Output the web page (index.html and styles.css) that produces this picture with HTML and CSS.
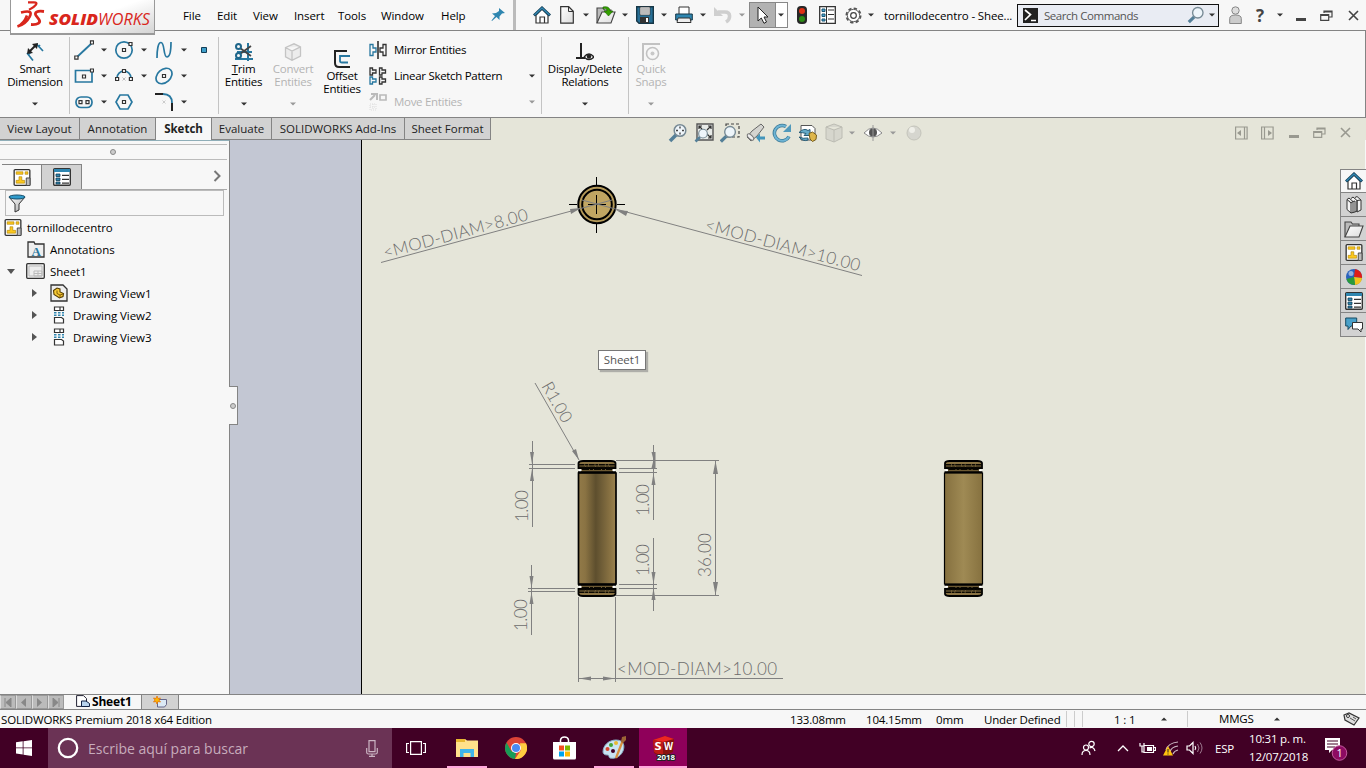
FILE: index.html
```html
<!DOCTYPE html>
<html lang="en">
<head>
<meta charset="utf-8">
<title>SOLIDWORKS Premium 2018</title>
<link rel="stylesheet" href="styles.css">
</head>
<body>
<svg class="defs" width="0" height="0">
  <defs>
    <linearGradient id="front" x1="0" x2="1"><stop offset="0" stop-color="#927a48"/><stop offset=".18" stop-color="#8a7343"/><stop offset=".46" stop-color="#5e4f2e"/><stop offset=".58" stop-color="#6b5a35"/><stop offset=".85" stop-color="#8a7343"/><stop offset="1" stop-color="#9b8350"/></linearGradient>
    <linearGradient id="side" x1="0" x2="1"><stop offset="0" stop-color="#85703f"/><stop offset=".5" stop-color="#9f8a54"/><stop offset="1" stop-color="#86713f"/></linearGradient>
    <linearGradient id="grey" x1="0" y1="0" x2="1" y2="1"><stop offset="0" stop-color="#fff"/><stop offset="1" stop-color="#a8a8a8"/></linearGradient>
    <linearGradient id="paper" x1="0" y1="0" x2="1" y2="1"><stop offset="0" stop-color="#fff"/><stop offset="1" stop-color="#dcdcdc"/></linearGradient>
  </defs>
  <symbol id="arr" viewBox="0 0 6 4"><path d="M0 0.5h6L3 3.5z" fill="currentColor"/></symbol>
  <symbol id="home" viewBox="0 0 18 18"><path d="M3 9v8h12V9L9 3z" fill="#fff" stroke="#333" stroke-width="1.2"/><path d="M7 17v-6h4.500v6" fill="none" stroke="#333" stroke-width="1.2"/><path d="M1 9.500L9 2l8 7.500" fill="none" stroke="#123d56" stroke-width="3"/><path d="M1.500 9L9 2l7.500 7" fill="none" stroke="#3187b1" stroke-width="1.400"/></symbol>
  <symbol id="drawing" viewBox="0 0 18 18"><rect x=".7" y=".7" width="16.600" height="16.600" rx="1" fill="#fff" stroke="#333" stroke-width="1.400"/><path d="M2.800 3h7.200v2.600H2.800zM12.300 3h3v2.600h-3zM5.800 8.200h3v3.800h3v3H2.800v-3h3z" fill="#fcc81e" stroke="#a87c00" stroke-width=".6"/><path d="M13.500 9.500h4v8h-4z" fill="#bbb" stroke="#444"/></symbol>
  <symbol id="list" viewBox="0 0 18 18"><rect x=".7" y=".7" width="16.600" height="16.600" rx="1" fill="#fff" stroke="#333" stroke-width="1.400"/><path d="M1 1h16v3H1z" fill="#2f86b0"/><path d="M3 6h4v2.500H3zM3 10h4v2.500H3zM3 14h4v2H3z" fill="#2f86b0" stroke="#123d56" stroke-width=".8"/><path d="M9 7.300h7M9 11.300h7M9 15.200h7" stroke="#333" stroke-width="1.200"/></symbol>
  <symbol id="folder" viewBox="0 0 20 18"><path d="M1 17V2h6l1.500 2H15v3" fill="#bbb" stroke="#444" stroke-width="1.100"/><path d="M1 17L6 6h13l-4 11z" fill="url(#paper)" stroke="#444" stroke-width="1.100"/></symbol>
  <symbol id="restore" viewBox="0 0 13 11"><path d="M4 3V1h8v6H9M4 2h8" fill="none" stroke="currentColor" stroke-width="1.200"/><path d="M.7 4.500h8v5.800h-8zM.7 5.300h8" fill="none" stroke="currentColor" stroke-width="1.200"/></symbol>
  <symbol id="close" viewBox="0 0 11 11"><path d="M1 1l9 9M10 1l-9 9" stroke="currentColor" stroke-width="1.600"/></symbol>
  <symbol id="min" viewBox="0 0 10 11"><path d="M0 8h10v3H0z" fill="currentColor"/></symbol>
  <symbol id="dview" viewBox="0 0 12 18"><path d="M1.500 1h9v3.500h-9zM7 1v3.500M1.500 11.500h7l2 1.500v4h-9z" fill="#fff" stroke="#333" stroke-width="1.200"/><path d="M1 6.700h10M1 9.300h10" stroke="#2f86b0" stroke-width="1.600" stroke-dasharray="2.500 1.500"/></symbol>
  <symbol id="caps" viewBox="0 0 40 14"><path d="M4 12.500h32V8H4z" fill="#6d5a33"/><path d="M1.500 3Q2 1 6 1h28q4 0 4.500 2v5h-37z" fill="#8a7343" stroke="#000" stroke-width="1.800"/><path d="M1.500 4.800h37M2 7.200h36" stroke="#0b0903" stroke-width="1.500" stroke-dasharray="6 .6 3 .6"/><path d="M5 9.300h30" stroke="#0b0903" stroke-width="1.400" stroke-dasharray="7 1 3 1"/><path d="M1 12.300h38" stroke="#000" stroke-width="2"/><path d="M2 9.500h2.500v1.500H2zM35.500 9.500H38v1.500h-2.500z" fill="#fff"/></symbol>
  <symbol id="mag" viewBox="0 0 20 20"><path d="M8 12l-6 6" stroke="#547f98" stroke-width="3.500"/><circle cx="12" cy="7.500" r="5.800" fill="#eef5fa" stroke="#778a95" stroke-width="1.500"/></symbol>
</svg>

<header class="titlebar">
  <div class="logo">
    <svg width="144" height="34" viewBox="0 0 144 34">
      <g fill="none" stroke="#d9261c" stroke-width="2.200"><path d="M17 2.300h6c5 0 2 4-5 7.500"/><path d="M10 12.500c10-2.500 11 0 8.500 4.500-2 4-6 8-12 9.500 6-2.500 8-7 9.500-11" stroke-width="2.600"/><path d="M33 11.500c-7-1-10 1-8 4l3 4c2 3-1 5.500-8 5" stroke-width="2.800"/></g>
      <g fill="#d9261c" font-family="Open Sans, sans-serif" font-size="15.500" font-style="italic"><text x="38" y="24.500" font-weight="800" textLength="49" lengthAdjust="spacingAndGlyphs">SOLID</text><text x="87" y="24.500" textLength="52" lengthAdjust="spacingAndGlyphs">WORKS</text></g>
    </svg>
  </div>
  <nav class="menu"><span>File</span><span>Edit</span><span>View</span><span>Insert</span><span>Tools</span><span>Window</span><span>Help</span>
    <svg width="14" height="14" viewBox="0 0 14 14"><path d="M8 0l6 5-3 .5-2.500 3V12L5.500 9 1 13 .5 12.500 4 8 1 5.500l4-.5L8 3z" fill="#2f86b0"/></svg></nav>
  <div class="quick">
    <svg width="18" height="18"><use href="#home"/></svg>
    <svg width="14" height="18" viewBox="0 0 14 18"><path d="M.7.700h8l4.600 4.500v12H.7z" fill="url(#paper)" stroke="#333" stroke-width="1.200"/><path d="M8.500 1v4.500H13" fill="none" stroke="#333"/></svg>
    <svg class="a"><use href="#arr"/></svg>
    <svg width="20" height="18" viewBox="0 0 20 18"><use href="#folder"/><path d="M7 1c5-1 7 1 7 4h3l-4.500 5L8 5h3c0-2-1-3-4-2z" fill="#35a000" stroke="#1b6500" stroke-width=".6"/></svg>
    <svg class="a"><use href="#arr"/></svg>
    <svg width="18" height="18" viewBox="0 0 18 18"><path d="M.7.700h16.600v16.600H3L.7 15z" fill="#276f96" stroke="#173747" stroke-width="1.400"/><path d="M4 1h10v8H4z" fill="#eee" stroke="#333" stroke-width=".7"/><path d="M5 3h8M5 5h8M5 7h8" stroke="#888"/><path d="M4 11h9v6H4z" fill="#333"/><path d="M10 12h2v4h-2z" fill="#fff"/></svg>
    <svg class="a"><use href="#arr"/></svg>
    <svg width="18" height="18" viewBox="0 0 18 18"><path d="M4 8V1h10v7" fill="#fff" stroke="#333"/><path d="M.7 8h16.600v6H.7z" fill="#2f86b0" stroke="#173747"/><path d="M3 12h12l1 4.500H2z" fill="#eee" stroke="#333"/></svg>
    <svg class="a"><use href="#arr"/></svg>
    <svg width="18" height="18" viewBox="0 0 18 18"><path d="M4 6h7c6 0 6 7 1 10" fill="none" stroke="#cfcfcf" stroke-width="3.500"/><path d="M0 1v9h9z" fill="#cfcfcf"/></svg>
    <svg class="a dim"><use href="#arr"/></svg>
    <div class="select"><svg width="12" height="18" viewBox="0 0 12 18"><path d="M1 1v14l3.300-3 2.700 5.300 2.500-1.300L7 11h4z" fill="#fff" stroke="#222"/></svg><svg class="a"><use href="#arr"/></svg></div>
    <svg width="12" height="18" viewBox="0 0 12 18"><rect x="1" width="10" height="18" rx="4" fill="#272727"/><circle cx="6" cy="5" r="3" fill="#e03014"/><circle cx="6" cy="13" r="3" fill="#2c8c13"/></svg>
    <svg width="17" height="18" viewBox="0 0 17 18"><path d="M.7.700h15.600v16.600H.7z" fill="#fff" stroke="#333" stroke-width="1.300"/><path d="M7.500 1v16" stroke="#333"/><path d="M3 3h3v2.500H3zM3 8h3v2.500H3zM3 13h3v2H3z" fill="#49a8d4" stroke="#1b5472"/><path d="M9 4h6M9 8.500h6M9 13h6" stroke="#333"/></svg>
    <svg width="17" height="17" viewBox="0 0 18 18"><circle cx="9" cy="9" r="7.500" fill="none" stroke="#555" stroke-width="2" stroke-dasharray="3.500 2.390"/><circle cx="9" cy="9" r="6.500" fill="#fff" stroke="#555"/><circle cx="9" cy="9" r="3" fill="none" stroke="#444" stroke-width="1.300"/></svg>
    <svg class="a"><use href="#arr"/></svg>
  </div>
  <div class="doc">tornillodecentro - Shee...</div>
  <div class="search">
    <svg width="15" height="15" viewBox="0 0 15 15"><path d="M0 0h15v15H0z" fill="#222"/><path d="M2 2l5.500 4.500L2 12M8 12.500h5" fill="none" stroke="#fff" stroke-width="1.700"/></svg>
    <span>Search Commands</span><svg width="18" height="18"><use href="#mag"/></svg><svg class="a"><use href="#arr"/></svg>
  </div>
  <div class="win">
    <svg width="13" height="18" viewBox="0 0 13 18"><circle cx="6.500" cy="4.500" r="3.700" fill="#ddd" stroke="#888"/><path d="M.7 17.500v-5q0-3.500 5.800-3.500t5.800 3.500v5z" fill="#ccc" stroke="#888"/></svg>
    <b>?</b><svg class="a"><use href="#arr"/></svg>
    <svg width="10" height="11"><use href="#min"/></svg><svg width="13" height="11"><use href="#restore"/></svg><svg width="11" height="11"><use href="#close"/></svg>
  </div>
</header>

<section class="ribbon">
  <div class="big smart"><svg width="18" height="18" viewBox="0 0 18 18"><path d="M1 10l6 7.500M10.500 1L17 8M2 12l3-3M12 4l2-2" stroke="#2878a0" stroke-width="1.700"/><path d="M3 9l7-7" stroke="#222" stroke-width="2"/><path d="M1 11l1-6 5 5zM12 0l-1 6-5-5z" fill="#222"/></svg><span>Smart<br>Dimension</span><svg class="a"><use href="#arr"/></svg></div>
  <div class="tools">
    <svg width="20" height="20" viewBox="0 0 20 20"><path d="M2.500 17.500l16-15" stroke="#2878a0" stroke-width="1.800"/><path d="M.8 16h3.200v3.200H.8zM16.500.800h3V4h-3z" fill="#fff" stroke="#333" stroke-width="1.200"/></svg><svg class="a"><use href="#arr"/></svg>
    <svg width="20" height="20" viewBox="0 0 20 20"><circle cx="10" cy="10" r="8.200" fill="none" stroke="#2878a0" stroke-width="1.700"/><path d="M8.500 8.500h3v3h-3zM15 2.500h3v3h-3z" fill="#fff" stroke="#333" stroke-width="1.200"/></svg><svg class="a"><use href="#arr"/></svg>
    <svg width="18" height="18" viewBox="0 0 18 18"><path d="M2 17C2 9 3 1.500 6 1.500c4 0 2 14.500 6 14.500 3 0 4-7 4-15" fill="none" stroke="#2878a0" stroke-width="1.700"/></svg><svg class="a"><use href="#arr"/></svg>
    <svg width="6" height="6" viewBox="0 0 6 6"><path d="M.5.500h5v5h-5z" fill="#3e9fca" stroke="#123d56"/></svg>
    <svg width="20" height="18" viewBox="0 0 20 18"><path d="M1.500 3.500h16.500v11.500H1.500z" fill="none" stroke="#2878a0" stroke-width="1.700"/><path d="M8.500 8h3v3h-3zM16.500 2h3v3h-3z" fill="#fff" stroke="#333" stroke-width="1.200"/></svg><svg class="a"><use href="#arr"/></svg>
    <svg width="18" height="18" viewBox="0 0 18 18"><path d="M2 11a7 7 0 0 1 14 0" fill="none" stroke="#2878a0" stroke-width="1.700"/><path d="M7.500 2.500h3v3h-3zM.6 10.500h3v3h-3zM14.400 10.500h3v3h-3z" fill="#fff" stroke="#333" stroke-width="1.200"/><path d="M7.500 10.500l3 3M10.500 10.500l-3 3" stroke="#bbb"/></svg><svg class="a"><use href="#arr"/></svg>
    <svg width="18" height="18" viewBox="0 0 18 18"><ellipse cx="9" cy="9" rx="9" ry="6.500" transform="rotate(-42 9 9)" fill="none" stroke="#2878a0" stroke-width="1.700"/><path d="M7.500 7.500h3v3h-3z" fill="#fff" stroke="#333" stroke-width="1.200"/></svg><svg class="a"><use href="#arr"/></svg>
    <i></i>
    <svg width="18" height="18" viewBox="0 0 18 18"><rect x="1" y="4" width="16" height="10.500" rx="5" fill="none" stroke="#2878a0" stroke-width="1.700"/><path d="M4 7.700h3v3H4zM11 7.700h3v3h-3z" fill="#fff" stroke="#333" stroke-width="1.200"/></svg><svg class="a"><use href="#arr"/></svg>
    <svg width="18" height="18" viewBox="0 0 18 18"><path d="M5 2h8l4 7-4 7H5L1 9z" fill="none" stroke="#2878a0" stroke-width="1.700"/><path d="M7.500 7.500h3v3h-3z" fill="#fff" stroke="#333" stroke-width="1.200"/></svg><i></i>
    <svg width="18" height="18" viewBox="0 0 18 18"><path d="M0 1h8M17 10v8" stroke="#222" stroke-width="2"/><path d="M8 1q9 0 9 9" fill="none" stroke="#2878a0" stroke-width="1.800"/><path d="M7.500 7.500l3 3M10.500 7.500l-3 3" stroke="#ccc"/></svg><svg class="a"><use href="#arr"/></svg>
  </div>
  <div class="big trim"><svg width="18" height="18" viewBox="0 0 18 18"><path d="M13 0v18M0 16h18M2 9h15" stroke="#2878a0" stroke-width="2"/><path d="M5 5l11 8M5 11l11-8" stroke="#444" stroke-width="1.800"/><circle cx="3.500" cy="3.500" r="2.500" fill="none" stroke="#1f668a" stroke-width="2"/><circle cx="3.500" cy="12.500" r="2.500" fill="none" stroke="#1f668a" stroke-width="2"/></svg><span><u>T</u>rim<br>Entities</span><svg class="a"><use href="#arr"/></svg></div>
  <div class="big convert dim"><svg width="18" height="18" viewBox="0 0 18 18"><path d="M1.500 4.500L10 .800l6.500 3V13L8 17.300l-6.500-3.500zM1.500 4.500L8 8l8.500-4.200M8 8v9" fill="#ececec" stroke="#c4c4c4" stroke-width="1.300"/></svg><span>Convert<br>Entities</span><svg class="a"><use href="#arr"/></svg></div>
  <div class="big offset"><svg width="18" height="18" viewBox="0 0 18 18"><path d="M14 1H2v12q0 4 4 4h11" fill="none" stroke="#222" stroke-width="2"/><path d="M17 6H7v5q0 1.500 2 1.500h6" fill="none" stroke="#2878a0" stroke-width="1.800"/></svg><span>Offset<br>Entities</span></div>
  <div class="rows">
    <svg width="18" height="18" viewBox="0 0 18 18"><path d="M9 0v18" stroke="#222" stroke-width="1.500"/><path d="M1 3.500h3v3.500h3v4H4v3.500H1z" fill="none" stroke="#2878a0" stroke-width="1.300"/><path d="M17 3.500h-3v3.500h-3v4h3v3.500h3z" fill="none" stroke="#333" stroke-width="1.300"/></svg><span>Mirror Entities</span><i></i>
    <svg width="18" height="18" viewBox="0 0 18 18"><path d="M1 1h2.500v2H7v3H3.500v2H1zM10.500 1H13v2h3.500v3H13v2h-2.500zM10.500 10H13v2h3.500v3H13v2h-2.500z" fill="none" stroke="#333" stroke-width="1.300"/><path d="M1 10h2.500v2H7v3H3.500v2H1z" fill="none" stroke="#2878a0" stroke-width="1.300"/></svg><span>Linear Sketch Pattern</span><svg class="a"><use href="#arr"/></svg>
    <svg class="dim" width="18" height="18" viewBox="0 0 18 18"><path d="M1 7l5-5M2 1h6v6" fill="none" stroke="#bbb" stroke-width="2"/><path d="M11 2h6v5h-6z" fill="none" stroke="#bbb" stroke-width="1.700"/><path d="M1 11h6v6H1zM4 11v6M1 14h6" fill="none" stroke="#ddd" stroke-dasharray="1 1"/></svg><span class="dim">Move Entities</span><svg class="a dim"><use href="#arr"/></svg>
  </div>
  <div class="big display"><svg width="18" height="18" viewBox="0 0 18 18"><path d="M5 0v15M0 15h9" stroke="#222" stroke-width="2"/><path d="M8 14q5-6 10 0-5 5-10 0" fill="#fff" stroke="#222" stroke-width="1.300"/><circle cx="13" cy="13.500" r="2.200" fill="#222"/></svg><span>Display/Delete<br>Relations</span><svg class="a"><use href="#arr"/></svg></div>
  <div class="big snaps dim"><svg width="18" height="18" viewBox="0 0 18 18"><path d="M1 18V1h17" fill="none" stroke="#c2c2c2" stroke-width="2"/><circle cx="10.500" cy="10.500" r="6" fill="none" stroke="#c2c2c2" stroke-width="1.600"/><circle cx="10.500" cy="10.500" r="2" fill="#c8c8c8"/></svg><span>Quick<br>Snaps</span><svg class="a"><use href="#arr"/></svg></div>
</section>

<main class="work">
  <div class="tabrow">
    <div class="tabs"><span>View Layout</span><span>Annotation</span><span class="on">Sketch</span><span>Evaluate</span><span>SOLIDWORKS Add-Ins</span><span>Sheet Format</span></div>
    <div class="hud">
      <svg width="20" height="20" viewBox="0 0 20 20"><use href="#mag"/><path d="M12 3.500v2M12 9.500v2M8 7.500h2M14 7.500h2" stroke="#444" stroke-width="1.400"/></svg>
      <svg width="20" height="20" viewBox="0 0 20 20"><path d="M3 1h16v16H3z" fill="#e8ebe8" stroke="#555" stroke-width="1.400"/><path d="M5 6V3h3M5 3l3 3M14 3h3v3M17 3l-4 4M17 12v3h-3M17 15l-4-4" fill="none" stroke="#333" stroke-width="1.200"/><g transform="translate(0 5) scale(.75)"><use href="#mag" width="20" height="20"/></g></svg>
      <svg width="20" height="20" viewBox="0 0 20 20"><path d="M6 1h13v13H6z" fill="none" stroke="#444" stroke-width="1.200" stroke-dasharray="3 2"/><g transform="translate(-1 2) scale(.92)"><use href="#mag" width="20" height="20"/></g></svg>
      <svg width="20" height="20" viewBox="0 0 20 20"><path d="M1 14l5-6 9-7 3 3-7 9-6 5z" fill="#d4d4d0" stroke="#666"/><ellipse cx="4.500" cy="14" rx="2" ry="4" transform="rotate(-45 4.500 14)" fill="#eee" stroke="#777"/><path d="M10 14.500l4-4v3h5v3h-5v3z" fill="#4395bb"/></svg>
      <svg width="20" height="20" viewBox="0 0 20 20"><path d="M14 3.500a7.700 7.700 0 1 0 3 10" fill="none" stroke="#3b7895" stroke-width="3.500"/><path d="M14 3.500a7.700 7.700 0 1 0 3 10" fill="none" stroke="#6eb4d4" stroke-width="2"/><path d="M19 1v8h-8z" fill="#5199bb"/></svg>
      <svg width="20" height="20" viewBox="0 0 20 20"><path d="M3 2.500h11l3 3V17H3z" fill="#fff" stroke="#555"/><path d="M1 9.500q5-5 9-2l2-1v6H6l2-2q-3-1-7-1zM1 14q4 5 9 3v-2q-5 1-9-1z" fill="#65aac8" stroke="#285c76"/><path d="M11 10.500l3.500-1.500 4 3-.5 4.500-3.500 2L12 16z" fill="#deb64a" stroke="#765c1b"/></svg>
      <svg width="20" height="20" viewBox="0 0 20 20"><path d="M2 4l8-3 8 3v11l-8 4-8-3zM2 4l8 3 8-3M10 7v12" fill="#d6d6cd" stroke="#bcbcb3"/></svg>
      <svg class="a"><use href="#arr"/></svg>
      <svg width="20" height="20" viewBox="0 0 20 20"><path d="M1 10q9-10 18 0-9 8-18 0" fill="#fff" stroke="#888"/><circle cx="10" cy="9.500" r="4" fill="#555"/><path d="M10 2v16" stroke="#999"/></svg>
      <svg class="a"><use href="#arr"/></svg>
      <svg width="16" height="16" viewBox="0 0 16 16"><circle cx="8" cy="8" r="7" fill="#d6d6cf" stroke="#c4c4bb"/><circle cx="6" cy="5" r="3" fill="#efefe9"/></svg>
    </div>
    <div class="docwin">
      <svg width="13" height="14" viewBox="0 0 13 14"><path d="M.6 1h11.500v12H.6zM9.500 1v12" fill="none" stroke="currentColor" stroke-width="1.200"/><path d="M6 4v6L2 7z" fill="currentColor"/></svg>
      <svg width="13" height="14" viewBox="0 0 13 14"><path d="M.6 1h11.500v12H.6zM3.500 1v12" fill="none" stroke="currentColor" stroke-width="1.200"/><path d="M7 4v6l4-3z" fill="currentColor"/></svg>
      <svg width="10" height="11"><use href="#min"/></svg><svg width="13" height="11"><use href="#restore"/></svg><svg width="11" height="11"><use href="#close"/></svg>
    </div>
  </div>
  <div class="body">
    <aside class="panel">
      <div class="grip"><i class="dot"></i></div>
      <div class="ptabs"><span class="on"><svg width="18" height="17"><use href="#drawing"/></svg></span><span><svg width="18" height="18"><use href="#list"/></svg></span><svg class="chev" width="8" height="12" viewBox="0 0 8 12"><path d="M1.500 1l5 5-5 5" fill="none" stroke="#777" stroke-width="2"/></svg></div>
      <div class="filter"><svg width="18" height="19" viewBox="0 0 18 19"><path d="M1 3l6 7v8l4-2v-6l6-7z" fill="url(#grey)" stroke="#333"/><ellipse cx="9" cy="3" rx="8" ry="2" fill="#2f9bcc" stroke="#164e6b"/></svg></div>
      <ul class="tree">
        <li class="l0"><svg width="18" height="17"><use href="#drawing"/></svg>tornillodecentro</li>
        <li class="l1"><svg width="18" height="18" viewBox="0 0 18 18"><path d="M1 17V2h6l1 2h9v13z" fill="#eee" stroke="#333" stroke-width="1.300"/><text x="4.500" y="15.500" font-family="Liberation Serif, serif" font-size="13" font-weight="bold" fill="#2878a0">A</text></svg>Annotations</li>
        <li class="l1"><svg class="tw open" width="8" height="5" viewBox="0 0 8 5"><path d="M0 0h8L4 5z" fill="#555"/></svg><svg width="19" height="16" viewBox="0 0 19 16"><rect x=".7" y=".7" width="17.600" height="14.600" rx="1" fill="#eee" stroke="#333" stroke-width="1.300"/><path d="M8 13V8h8v5zM8 10.500h8M12 8v5M3 3h13v10H3z" fill="none" stroke="#bbb"/></svg>Sheet1</li>
        <li class="l2"><svg class="tw" width="5" height="8" viewBox="0 0 5 8"><path d="M0 0v8l5-4z" fill="#555"/></svg><svg width="18" height="18" viewBox="0 0 18 18"><path d="M1 1h12l4 4v12H1z" fill="#eee" stroke="#333" stroke-width="1.300"/><path d="M3.500 6.500L7 4l3 1v3l3.500 1.500-.5 3L9.500 14 4 10.500z" fill="#f8ca35" stroke="#543c00" stroke-width="1.100"/><path d="M7 6.500v3l3 1.500 3-1M10 11v2.500" fill="none" stroke="#765100" stroke-width=".9"/></svg>Drawing View1</li>
        <li class="l2"><svg class="tw" width="5" height="8" viewBox="0 0 5 8"><path d="M0 0v8l5-4z" fill="#555"/></svg><svg width="18" height="18"><use href="#dview"/></svg>Drawing View2</li>
        <li class="l2"><svg class="tw" width="5" height="8" viewBox="0 0 5 8"><path d="M0 0v8l5-4z" fill="#555"/></svg><svg width="18" height="18"><use href="#dview"/></svg>Drawing View3</li>
      </ul>
      <div class="handle"><i class="dot"></i></div>
    </aside>
    <section class="canvas">
      <svg class="sheet" width="1136" height="554" viewBox="230 140 1136 554">
        <path d="M230 140h131v554H230z" fill="#c3c7d3"/><path d="M361.500 140v554" stroke="#000"/>
        <circle cx="597" cy="204.500" r="18.700" fill="#b59a59" stroke="#000" stroke-width="2"/><circle cx="597" cy="204.500" r="14.800" fill="#c0a562" stroke="#000" stroke-width="2"/>
        <path d="M596.500 177v8M596.500 224v9M596.500 195v19M569 204.500h8M617 204.500h8M588 204.500h18" stroke="#000"/>
        <g stroke="#808080" fill="none">
          <path d="M381 262.500L612 200M862 275.500L582 200"/>
          <path d="M535 383l44 77M532.500 441v86M529 464.500h46M529 468.500h46M531.500 565v70M528 588.500h47M528 591.500h47"/>
          <path d="M653.500 445v75M653.500 538v73M616 460.500h103M619 468.500h38M619 472.500h38M619 584.500h38M619 588.500h38M616 595.500h103M715.500 460v136M578.500 597v85M615.500 597v85M578 678.500h205"/>
        </g>
        <path fill="#808080" d="M581 208l-11 1 1 5zM616 210l12 1-2 5zM579 460l-7-9 4-2zM532 464l-2-12h4zM532 469l-2 12h4zM531.500 588l-2-12h4zM531.500 592l-2 12h4zM653.500 460l-2-8h4v16h-4zM653.500 473l-2 12h4zM653.500 584l-2-12h4zM653.500 588l-2 12h4zM715.500 461l-2.500 13h5zM715.500 595l-2.500-13h5zM579 678.500l12-2v4zM615 678.500l-12-2v4z"/>
        <g class="dims">
          <text transform="translate(385 258.500) rotate(-15)" textLength="149">&lt;MOD-DIAM&gt;8.00</text>
          <text transform="translate(704 230) rotate(15)" textLength="160">&lt;MOD-DIAM&gt;10.00</text>
          <text x="617" y="675" textLength="160">&lt;MOD-DIAM&gt;10.00</text>
          <text transform="translate(541 386) rotate(60)" textLength="44">R1.00</text>
          <text transform="translate(528 522) rotate(-90)" textLength="32">1.00</text>
          <text transform="translate(527 631) rotate(-90)" textLength="32">1.00</text>
          <text transform="translate(649 516) rotate(-90)" textLength="32">1.00</text>
          <text transform="translate(649 576) rotate(-90)" textLength="32">1.00</text>
          <text transform="translate(711 577) rotate(-90)" textLength="44">36.00</text>
        </g>
        <path d="M578.500 473h37.500v111h-37.500z" fill="url(#front)" stroke="#000" stroke-width="1.700"/>
        <use href="#caps" x="577" y="460" width="40" height="14"/><use href="#caps" width="40" height="14" transform="translate(577 597) scale(1 -1)"/>
        <path d="M944.500 473h38v111h-38z" fill="url(#side)" stroke="#000" stroke-width="1.200"/>
        <use href="#caps" x="943.500" y="460" width="40" height="14"/><use href="#caps" width="40" height="14" transform="translate(943.500 597) scale(1 -1)"/>
      </svg>
      <div class="tip">Sheet1</div>
      <div class="taskpane">
        <span class="on"><svg width="18" height="18"><use href="#home"/></svg></span>
        <span><svg width="18" height="18" viewBox="0 0 18 18"><path d="M2 3.500v10l4 3.500v-10zM2 3.500l2-1.500 4 3.500M6 2.500l2-1.500 4 3.500v10.500l-2 1M10 1.500l2-1 4 3.500V14l-4 2V4.500M6 7l2-1.500v11L6 17M8 5.500L10 5v11l-2 .5M12 4.500l4-.5" fill="#f4f4f4" stroke="#333"/></svg></span>
        <span><svg width="20" height="18"><use href="#folder"/></svg></span>
        <span><svg width="18" height="17"><use href="#drawing"/></svg></span>
        <span><svg width="18" height="18" viewBox="0 0 18 18"><circle cx="9" cy="9" r="8" fill="#2a62bd"/><path d="M9 9L10 1a8 8 0 0 1 7 9z" fill="#df1d18"/><path d="M9 9l8 1a8 8 0 0 1-7 7z" fill="#f3c41d"/><path d="M9 9l1 8a8 8 0 0 1-8.500-6z" fill="#2b9b38"/><circle cx="6" cy="5.500" r="2.500" fill="#fff" opacity=".5"/></svg></span>
        <span><svg width="18" height="18"><use href="#list"/></svg></span>
        <span><svg width="18" height="16" viewBox="0 0 18 16"><path d="M.7 1h11v8H6l-3 3.500V9H.7z" fill="#49a0c9" stroke="#174a63"/><path d="M7.500 5.500h10v6.500H16v3L13 12H7.500z" fill="#fff" stroke="#333"/></svg></span>
      </div>
    </section>
  </div>
</main>

<div class="sheets">
  <div class="nav"><span><svg width="8" height="9" viewBox="0 0 8 9"><path d="M1 0v9M7 0v9L2 4.500z" fill="#888" stroke="#888"/></svg></span><span><svg width="8" height="9" viewBox="0 0 8 9"><path d="M6 0v9L1 4.500z" fill="#888"/></svg></span><span><svg width="8" height="9" viewBox="0 0 8 9"><path d="M1 0v9l5-4.500z" fill="#888"/></svg></span><span><svg width="8" height="9" viewBox="0 0 8 9"><path d="M7 0v9M1 0v9l5-4.500z" fill="#888" stroke="#888"/></svg></span></div>
  <div class="current"><svg width="14" height="12" viewBox="0 0 14 12"><path d="M.6.600h6.900l3 3v7.800H.6z" fill="#fff" stroke="#223"/><path d="M5.500 6h4.500l3.500 2.500v3h-8z" fill="#b8d4ee" stroke="#124"/></svg>Sheet1</div>
  <div class="new"><svg width="15" height="12" viewBox="0 0 15 12"><path d="M4.500 3.500h9v5l-2 2.500h-7z" fill="#dbe9f5" stroke="#668"/><path d="M4 0l1 2.500L7.500 2 6 4l1.500 2L5 5.500 4 8 3 5.500.5 6 2 4 .5 2 3 2.500z" fill="#ffb700" stroke="#e36b00" stroke-width=".7"/></svg></div>
</div>
<footer class="status">
  <span>SOLIDWORKS Premium 2018 x64 Edition</span><span>133.08mm</span><span>104.15mm</span><span>0mm</span><span>Under Defined</span><span class="bars"></span><span>1 : 1</span><svg class="a up"><use href="#arr"/></svg><span class="line">MMGS</span><svg class="a up"><use href="#arr"/></svg>
  <svg width="17" height="14" viewBox="0 0 17 14"><path d="M1 3l5-2 10 5-5 7L2 8z" fill="#ddd" stroke="#333" stroke-width="1.200"/><circle cx="5" cy="4" r="1.500" fill="#fff" stroke="#333"/><path d="M7 6l5 3M10 5l3 2" stroke="#555"/></svg>
</footer>

<footer class="taskbar">
  <div class="start"><svg width="16" height="16" viewBox="0 0 16 16"><path d="M0 2.300l6.700-1v6.200H0zM7.500 1.200L16 0v7.500H7.500zM0 8.300h6.700v6.200L0 13.600zM7.500 8.300H16V16l-8.500-1.200z" fill="#fff"/></svg></div>
  <div class="cortana"><svg width="22" height="22" viewBox="0 0 22 22"><circle cx="11" cy="11" r="9.200" fill="none" stroke="#fff" stroke-width="2.300"/></svg><span>Escribe aquí para buscar</span><svg width="12" height="17" viewBox="0 0 12 17"><path d="M3 .7h6v11H3zM.7 8v4.500q0 1.500 2 1.500h6.600q2 0 2-1.500V8M6 14v2.500M3 16.300h6" fill="none" stroke="#cbb5c3" stroke-width="1.200"/></svg></div>
  <div class="apps">
    <span><svg width="20" height="14" viewBox="0 0 20 14"><path d="M4.600.600h10.800v12.800H4.600zM3 2.500H.6v9H3M17 2.500h2.400v9H17" fill="none" stroke="#fff" stroke-width="1.200"/></svg></span>
    <span class="run"><svg width="22" height="18" viewBox="0 0 22 18"><path d="M0 0h9l2 1.500h11V18H0z" fill="#ffe18b"/><path d="M0 0h9v3H0z" fill="#e8b831"/><path d="M4 18v-8h14v8h-3.500v-4h-7v4z" fill="#3fb5ea"/></svg></span>
    <span><svg width="22" height="22" viewBox="0 0 22 22"><circle cx="11" cy="11" r="11" fill="#dc4437"/><path d="M1.500 5.500L6.200 14l4.800 2-1 6A11 11 0 0 1 1.500 5.500z" fill="#189c57"/><path d="M10 22l5.800-8.500-.8-7.200h6a11 11 0 0 1-11 15.700z" fill="#ffcd40"/><circle cx="11" cy="11" r="5" fill="#fff"/><circle cx="11" cy="11" r="4" fill="#4a8af4"/></svg></span>
    <span><svg width="23" height="24" viewBox="0 0 23 24"><path d="M7.500 6V4Q8 1 11.500 1T15.500 4v2" fill="none" stroke="#fff" stroke-width="1.500"/><path d="M0 6h23v16q0 1.500-1.500 1.500h-20Q0 23.500 0 22z" fill="#fff"/><path d="M6 9.500h5v5H6z" fill="#f25022"/><path d="M12 9.500h5v5h-5z" fill="#7fba00"/><path d="M6 15.500h5v5H6z" fill="#00a4ef"/><path d="M12 15.500h5v5h-5z" fill="#ffb900"/></svg></span>
    <span class="run"><svg width="24" height="24" viewBox="0 0 24 24"><path d="M1 16c0-7 6-12 13-12 8 0 9 6 7 11-3 7-10 8-13 7-2-1 0-3-3-3-2 0-4-1-4-3z" fill="#c9e3f2" stroke="#86adc2"/><circle cx="5.500" cy="13" r="2" fill="#d6442b"/><circle cx="9" cy="9" r="2" fill="#42a537"/><circle cx="14" cy="7" r="2" fill="#e8b831"/><circle cx="11" cy="15" r="2" fill="#410025"/><path d="M21 4l-7 18" stroke="#d8903f" stroke-width="2.200"/><path d="M19 6l1-5 4-1v4l-3 3z" fill="#9c6435"/></svg></span>
    <span class="run active"><svg width="26" height="26" viewBox="0 0 26 26"><path d="M3 5l12-4 9 3-1 13-11 5-8-4z" fill="#87120f"/><path d="M3 5l12-4 9 3-11 3z" fill="#ee2722"/><path d="M3 5l10 2v15l-9-5z" fill="#bd1916"/><g font-family="Open Sans, sans-serif" font-weight="bold" fill="#fff"><text x="4.500" y="14.500" font-size="10" textLength="7" lengthAdjust="spacingAndGlyphs">S</text><text x="14" y="14.500" font-size="10" textLength="9" lengthAdjust="spacingAndGlyphs">W</text><text x="7" y="25" font-size="7.500" textLength="18" lengthAdjust="spacingAndGlyphs" stroke="#222" stroke-width="2" paint-order="stroke">2018</text></g></svg></span>
  </div>
  <div class="tray">
    <svg width="15" height="16" viewBox="0 0 15 16"><circle cx="10.500" cy="4" r="2.700" fill="none" stroke="#fff" stroke-width="1.200"/><circle cx="5" cy="7.500" r="2.500" fill="none" stroke="#fff" stroke-width="1.200"/><path d="M1 15q0-4.500 4-4.500T9 15M8.500 8q4-2 5.500 3" fill="none" stroke="#fff" stroke-width="1.200"/></svg>
    <svg width="12" height="7" viewBox="0 0 12 7"><path d="M1 6l5-5 5 5" fill="none" stroke="#fff" stroke-width="1.300"/></svg>
    <svg width="17" height="12" viewBox="0 0 17 12"><path d="M5 3.500h9.500v7H5zM15 5.500h1.500v3H15M1 1v3h4V1M3 4v6h2" fill="none" stroke="#fff" stroke-width="1.200"/><path d="M8 5h5v4H8z" fill="#fff"/></svg>
    <svg width="17" height="16" viewBox="0 0 17 16"><path d="M3 10Q5 3 15 2M7 12q1-5 8-6M10 14q1-3 5-4" fill="none" stroke="#ccb9c4" stroke-width="1.200"/><path d="M5 6l5 9.500H0z" fill="#ffc20e"/><path d="M5 9v3.500M5 13.500v1" stroke="#222"/></svg>
    <svg width="18" height="14" viewBox="0 0 18 14"><path d="M1 5h2.500L7 1.500v11L3.500 9H1zM9 5q1.500 2 0 4" fill="none" stroke="#fff" stroke-width="1.200"/><path d="M11.500 3q3 4 0 8M14 1.500q4 5.500 0 11" fill="none" stroke="#9f7c91"/></svg>
    <span>ESP</span><span class="clock">10:31 p. m.<br>12/07/2018</span>
    <svg width="26" height="26" viewBox="0 0 26 26"><path d="M1 3h15v12H8l-3 3v-3H1z" fill="#fff"/><path d="M3 6h11M3 9h11M3 12h8" stroke="#410025"/><circle cx="15.500" cy="18" r="7.300" fill="#8d0b62" stroke="#c25b9e"/><text x="12.500" y="22" font-family="Open Sans, sans-serif" font-size="11" fill="#fff">1</text></svg>
  </div>
</footer>
</body>
</html>
```
FILE: styles.css
```css
* { box-sizing: border-box; }
body { margin: 0; width: 1366px; height: 768px; overflow: hidden; background: #f7f7f7; color: #000; font: 11.5px/13px "Open Sans", "Noto Sans", sans-serif; display: flex; flex-direction: column; white-space: nowrap; }
svg { display: block; flex: none; }
.defs { position: absolute; }
.a { width: 6px; height: 4px; color: #333; }
.a.dim, .dim .a { color: #999; }
.up { transform: rotate(180deg); }
.dim { color: #b4b4b4; }

.titlebar { position: relative; height: 31px; flex: none; display: grid; grid-template-columns: 183px 333px 364px 132px 201px 148px; grid-template-areas: "g m q d s w"; align-items: center; border-bottom: 1px solid #848484; }
.logo { position: absolute; left: 10px; top: 0; width: 145px; height: 35px; border: 1px solid #999; border-width: 0 1px 2px; background: linear-gradient(160deg, #fff 55%, #d4d4d4); z-index: 3; }
.menu { grid-area: m; display: grid; grid-template-columns: 34px 36px 41px 44px 43px 60px 50px 18px; align-items: center; height: 30px; border-right: 3px solid #bbb; letter-spacing: -.1px; }
.quick { grid-area: q; display: grid; grid-template-columns: 24px 26px 12px 27px 12px 27px 12px 27px 12px 27px 11px 43px 24px 27px 24px 12px; align-items: center; justify-items: center; padding-left: 14px; height: 30px; }
.select { width: 39px; height: 26px; display: grid; grid-template-columns: 25px 12px; align-items: center; justify-items: center; border: 1px solid #888; background: linear-gradient(90deg, #b2b2b2 25px, #888 25px, #888 26px, #fff 26px); }
.doc { grid-area: d; padding-left: 4px; letter-spacing: -.13px; }
.search { grid-area: s; margin-left: 5px; width: 202px; height: 23px; border: 1px solid #111; background: #e9ecf3; color: #555; display: flex; align-items: center; padding: 0 3px 0 5px; }
.search span { flex: 1; padding-left: 6px; letter-spacing: -.45px; }
.search svg + .a { margin-left: 4px; }
.win { grid-area: w; display: grid; grid-template-columns: 27px 21px 19px 24px 28px 11px; align-items: center; color: #444; padding-left: 16px; }
.win b { font-size: 17px; }

.ribbon { height: 87px; flex: none; display: grid; grid-template-columns: 70px 149px 49px 50px 48px 176px 87px 44px; border-bottom: 1px solid #848484; border-right: 1px solid #848484; }
.big { display: grid; grid-template-rows: 18px 26px 1fr; row-gap: 1px; justify-items: center; align-content: start; text-align: center; padding-top: 12px; height: 83px; letter-spacing: -.25px; }
.big .a { align-self: center; margin-top: 4px; }
.offset { padding-top: 19px; }
.smart, .display { border-right: 1px solid #c4c4c4; }
.smart, .display, .snaps, .tools, .rows { margin-top: 6px; height: 77px; }
.smart, .display, .snaps { padding-top: 6px; }
.smart { padding-left: 1px; }
.tools { display: grid; grid-template-columns: repeat(7, 20px); grid-template-rows: repeat(3, 26px); align-items: center; justify-items: center; padding-left: 4px; border-right: 1px solid #c4c4c4; }
.rows { display: grid; grid-template-columns: 25px 132px 12px; grid-template-rows: repeat(3, 26px); align-items: center; padding-left: 3px; border-right: 1px solid #c4c4c4; letter-spacing: -.3px; }
.rows span { padding-bottom: 2px; }
.rows .a { justify-self: center; }

.work { height: 576px; flex: none; display: flex; flex-direction: column; background: #e5e5d9; }
.tabrow { height: 22px; flex: none; display: grid; grid-template-columns: 491px 739px 136px; grid-template-rows: 22px; position: relative; z-index: 2; }
.tabs { display: grid; grid-template-columns: 80px 76px 56px 60px 133px 86px; color: #222; }
.tabs span { background: #d2d2d2; border: 1px solid #848484; border-width: 0 1px 1px 0; text-align: center; line-height: 21px; }
.tabs .on { background: #f7f7f7; border-bottom: 0; font-weight: 700; }
.hud { display: grid; grid-template-columns: repeat(7, 26px) 10px 31px 10px 32px; justify-items: center; align-items: center; height: 29px; padding-left: 174px; }
.hud .a { color: #999; }
.docwin { display: grid; grid-template-columns: 26px 28px 24px 27px 11px; align-items: center; height: 29px; padding-left: 5px; color: #999990; }

.body { flex: 1; display: grid; grid-template-columns: 230px 1136px; min-height: 0; }
.panel { position: relative; background: #f7f7f7; border-right: 1px solid #848484; border-top: 1px solid #8faeb8; display: flex; flex-direction: column; z-index: 1; }
.grip { height: 16px; margin: 3px 2px 0 0; padding-right: 1px; border: 1px solid #bbb; border-width: 1px 0; display: grid; place-items: center; }
.dot { width: 6px; height: 6px; border-radius: 50%; border: 1px solid #888; background: #ccc; }
.ptabs { display: flex; height: 30px; padding: 4px 0 0 2px; align-items: stretch; border-bottom: 1px solid #aaa; margin-right: 2px; }
.ptabs span { width: 39px; border-top: 1px solid #848484; display: grid; place-items: center; }
.ptabs span + span { background: #d2d2d2; border-left: 1px solid #848484; border-right: 1px solid #848484; width: 41px; }
.chev { margin: 6px 0 0 131px; }
.filter { margin: 0 0 0 5px; width: 219px; height: 26px; border: 1px solid #bbb; display: flex; align-items: center; padding-left: 2px; }
.tree { list-style: none; margin: 0; padding: 0; letter-spacing: -.06px; }
.tree li { height: 22px; display: flex; align-items: center; gap: 5px; }
.l0 { padding-left: 4px; }
.l1 { padding-left: 27px; }
.l2 { padding-left: 50px; }
.tw { margin-left: -18px; margin-right: 8px; }
.tw.open { margin-left: -20px; margin-right: 7px; }
.l1 .tw + svg { margin-left: -1px; }
.handle { position: absolute; left: 229px; top: 245px; width: 9px; height: 39px; background: #f7f7f7; border: 1px solid #848484; border-left: 0; display: grid; place-items: center; }
.canvas { position: relative; border-right: 1px solid #f7f7f7; }
.dims { font: 300 17px Lato, "Open Sans", sans-serif; fill: #6c6c6c; }
.tip { position: absolute; left: 368px; top: 210px; width: 48px; height: 20px; background: #fff; border: 1px solid #777; box-shadow: 2px 2px 1px #8889; color: #555; text-align: center; line-height: 18px; letter-spacing: -.1px; }
.taskpane { position: absolute; left: 1110px; top: 29px; width: 26px; display: grid; grid-template-rows: 23px repeat(5, 24px) 23px; border: 1px solid #848484; border-right: 0; background: #d2d2d2; }
.taskpane span { display: grid; place-items: center; border-bottom: 1px solid #848484; }
.taskpane .on { background: #f7f7f7; }
.taskpane span:last-child { border-bottom: 0; }

.sheets { height: 16px; flex: none; border-top: 1px solid #848484; border-bottom: 1px solid #848484; display: grid; grid-template-columns: 64px 77px 38px; grid-template-rows: 14px; }
.nav { display: grid; grid-template-columns: repeat(4, 1fr); background: #bbb; }
.nav span { display: grid; place-items: center; border: 1px solid #999; border-left-color: #ddd; }
.current { display: flex; align-items: center; gap: 2px; padding: 0 0 2px 12px; font-weight: 700; font-size: 12px; letter-spacing: -.2px; }
.new { background: #d2d2d2; border: 1px solid #848484; border-width: 0 1px; display: grid; place-items: center; }

.status { height: 18px; flex: none; display: grid; grid-template-columns: 789px 76px 70px 48px 82px 48px 47px 26px 87px 69px 20px; align-items: center; padding-left: 1px; letter-spacing: -.17px; }
.bars { height: 16px; background: linear-gradient(90deg, #ccc 1px, transparent 1px, transparent 8px, #ccc 8px, #ccc 9px, transparent 9px, transparent 16px, #ccc 16px, #ccc 17px, transparent 17px); }
.line { border-left: 1px solid #ccc; padding-left: 31px; line-height: 16px; }

.taskbar { height: 40px; flex: none; background: #410025; color: #fff; display: grid; grid-template-columns: 48px 344px 688px 286px; grid-template-rows: 40px; }
.start { display: grid; place-items: center; }
.cortana { display: flex; align-items: center; background: #6b3355; color: #c7acbc; padding: 0 14px 0 9px; font-size: 14px; }
.cortana span { flex: 1; padding-left: 9px; }
.apps { display: grid; grid-template-columns: 48px 54px 44px 53px 45px 54px; justify-items: center; }
.apps span { display: grid; place-items: center; width: 40px; }
.apps .run { box-shadow: inset 0 -2px #ffa8dc; }
.apps .active { background: #8f005a; width: 48px; }
.tray { display: grid; grid-template-columns: 36px 22px 24px 23px 29px 34px 75px 26px; align-items: center; padding-left: 1px; font-size: 11.5px; letter-spacing: -.2px; }
.clock { line-height: 18px; }
```
